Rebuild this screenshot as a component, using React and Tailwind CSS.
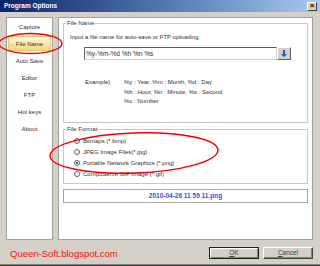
import React from 'react';

const MENU = ['Capture', 'File Name', 'Auto Save', 'Editor', 'FTP', 'Hot keys', 'About'];

const FORMATS = [
  { label: 'Bitmaps (*.bmp)', checked: false },
  { label: 'JPEG Image Files(*.jpg)', checked: false },
  { label: 'Portable Network Graphics (*.png)', checked: true },
  { label: 'CompuServe GIF Image (*.gif)', checked: false },
];

function GroupBox({ title, className, children }) {
  return (
    <div className={`relative border border-[#c8c8c4] ${className}`}>
      <span className="absolute -top-[5px] left-[2px] bg-white px-[1px] text-[6px] leading-[8px] text-[#303030]">
        {title}
      </span>
      {children}
    </div>
  );
}

function Radio({ label, checked }) {
  return (
    <div className="flex h-[11px] items-center">
      <span className="flex h-[6px] w-[6px] items-center justify-center rounded-full border border-[#606060] bg-white">
        {checked && <span className="h-[2px] w-[2px] rounded-full bg-[#202020]" />}
      </span>
      <span className="ml-[3px] text-[6px] leading-[8px] text-[#303030]">{label}</span>
    </div>
  );
}

export default function App() {
  return (
    <div className="relative flex h-[266px] w-[320px] flex-col overflow-hidden bg-[#d4d0c8] font-['Liberation_Sans',Arial,sans-serif]">
      {/* title bar */}
      <div className="flex h-[12px] items-center justify-between bg-gradient-to-r from-[#0a246a] to-[#a6caf0] pl-[4px] pr-[3px]">
        <span className="text-[6.5px] font-bold leading-[8px] text-white">Program Options</span>
        <div className="flex h-[9px] w-[10px] items-center justify-center border border-t-white border-l-white border-r-[#404040] border-b-[#404040] bg-[#d4d0c8] text-[8px] font-bold leading-[8px] text-black">
          ×
        </div>
      </div>

      {/* panels */}
      <div className="flex h-[228px] gap-[5px] px-[6px] pt-[5px]">
        <div className="flex h-[223px] w-[47px] flex-col border border-[#a0a09c] bg-white">
          {MENU.map((item) => (
            <div key={item} className="flex h-[17px] items-center justify-center">
              {item === 'File Name' ? (
                <div className="flex h-[15px] w-[43px] items-center justify-center border border-[#e8c878] bg-gradient-to-b from-[#fff8dc] to-[#f7d77a] text-[6px] leading-[8px] text-[#303030]">
                  {item}
                </div>
              ) : (
                <span className="text-[6px] leading-[8px] text-[#303030]">{item}</span>
              )}
            </div>
          ))}
        </div>

        <div className="flex h-[223px] w-[255px] flex-col border border-[#a0a09c] bg-white px-[4px] pt-[5px]">
          <GroupBox title="File Name" className="h-[100px]">
            <div className="flex flex-col">
              <span className="ml-[6px] mt-[9px] text-[6px] leading-[8px] text-[#303030]">
                Input a file name for auto-save or FTP uploading.
              </span>
              <div className="ml-[20px] mt-[6px] flex h-[13px]">
                <div className="flex w-[193px] items-center border border-t-[#606060] border-l-[#606060] border-r-[#d4d0c8] border-b-[#d4d0c8] bg-white pl-[1px] text-[6.5px] leading-[8px] text-[#303030]">
                  %y-%m-%d %h %n %s
                </div>
                <div className="flex w-[14px] items-center justify-center border border-t-white border-l-white border-r-[#606060] border-b-[#606060] bg-[#d4d0c8]">
                  <svg width="6" height="7" viewBox="0 0 6 7">
                    <path d="M2 0h2v4h2L3 7 0 4h2z" fill="#2a5ad8" />
                  </svg>
                </div>
              </div>
              <div className="ml-[21px] mt-[18px] flex text-[6px] leading-[9.5px] text-[#303030]">
                <span className="w-[39px]">Example)</span>
                <div className="flex flex-col">
                  <span>%y : Year, %m : Month, %d : Day</span>
                  <span>%h : Hour, %n : Minute, %s : Second</span>
                  <span>%c : Number</span>
                </div>
              </div>
            </div>
          </GroupBox>

          <GroupBox title="File Format" className="mt-[6px] h-[55px]">
            <div className="flex flex-col pl-[10px] pt-[5px]">
              {FORMATS.map((f) => (
                <Radio key={f.label} label={f.label} checked={f.checked} />
              ))}
            </div>
          </GroupBox>

          <div className="mt-[5px] flex h-[14px] items-center justify-center border border-[#a8a8a4] text-[6.5px] font-bold leading-[8px] text-[#3c4ee0]">
            2010-04-26 11 59 11.png
          </div>
        </div>
      </div>

      {/* bottom */}
      <div className="flex h-[24px] items-start pl-[10px] pr-[7px] pt-[7px]">
        <span className="mt-[1px] text-[9.5px] leading-[12px] text-[#f01010]">Queen-Soft.blogspot.com</span>
        <div className="ml-auto flex gap-[4px]">
          <div className="flex h-[12px] w-[50px] items-center justify-center border border-[#202020] bg-[#d4d0c8] shadow-[inset_1px_1px_#fff,inset_-1px_-1px_#808080] text-[6.5px] leading-[8px] text-[#404040]">
            <span><u>O</u>K</span>
          </div>
          <div className="flex h-[12px] w-[50px] items-center justify-center border border-t-white border-l-white border-r-[#404040] border-b-[#404040] bg-[#d4d0c8] shadow-[inset_-1px_-1px_#808080] text-[6.5px] leading-[8px] text-[#404040]">
            <span><u>C</u>ancel</span>
          </div>
        </div>
      </div>
      <div className="h-[1px] bg-[#808080]" />
      <div className="h-[1px] bg-[#404040]" />

      {/* red annotation circles */}
      <svg className="pointer-events-none absolute left-0 top-0" width="320" height="266" viewBox="0 0 320 266">
        <ellipse cx="30.5" cy="43.5" rx="31.5" ry="10" fill="none" stroke="#f00000" strokeWidth="1.4" />
        <ellipse cx="134" cy="153" rx="84" ry="20" fill="none" stroke="#f00000" strokeWidth="1.4" transform="rotate(-2 134 153)" />
      </svg>
    </div>
  );
}
